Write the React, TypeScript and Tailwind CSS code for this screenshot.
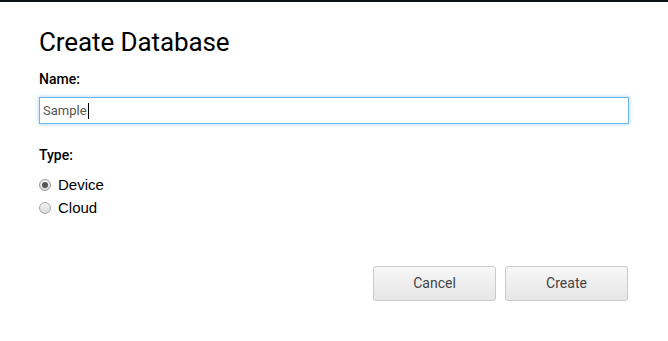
import React from "react";

export default function App() {
  return (
    <div className="w-[668px] h-[341px] bg-white border-t-2 border-[#0b1414] overflow-hidden" style={{ fontFamily: "Roboto, 'Liberation Sans', sans-serif" }}>
      <div className="pl-[39px] pr-[40px] pt-[23px]">
        <h1 className="text-[26px] leading-[34px] text-black font-normal tracking-[-0.1px]">Create Database</h1>
        <div className="mt-[11px] text-[14px] leading-[18px] font-medium text-black">Name:</div>
        <div className="mt-[9px] h-[27px] w-[590px] border border-[#6bb6f0] shadow-[0_0_4px_rgba(100,170,240,0.6)] flex items-center pl-[3px] text-[13px] text-[#555]">
          <span>Sample</span>
          <span className="inline-block w-px h-[16px] bg-black ml-px"></span>
        </div>
        <div className="mt-[22px] text-[14px] leading-[18px] font-medium text-black">Type:</div>
        <div className="mt-[12px] flex flex-col gap-[5px] text-[15px] leading-[18px] text-black" style={{ fontFamily: "'Liberation Sans', Arial, sans-serif" }}>
          <label className="flex items-center gap-[7px]">
            <span className="w-[12px] h-[12px] rounded-full border border-[#9a9a9a] bg-gradient-to-b from-[#f4f4f4] to-[#d8d8d8] flex items-center justify-center">
              <span className="w-[6px] h-[6px] rounded-full bg-[#555]"></span>
            </span>
            Device
          </label>
          <label className="flex items-center gap-[7px]">
            <span className="w-[12px] h-[12px] rounded-full border border-[#a8a8a8] bg-gradient-to-b from-[#f4f4f4] to-[#d8d8d8]"></span>
            Cloud
          </label>
        </div>
        <div className="mt-[49px] flex justify-end gap-[9px]">
          <button className="w-[123px] h-[35px] rounded-[3px] border border-[#cacaca] bg-gradient-to-b from-[#f7f7f7] to-[#e6e6e6] text-[14px] text-[#444]">Cancel</button>
          <button className="w-[123px] h-[35px] rounded-[3px] border border-[#cacaca] bg-gradient-to-b from-[#f7f7f7] to-[#e6e6e6] text-[14px] text-[#444]">Create</button>
        </div>
      </div>
    </div>
  );
}
